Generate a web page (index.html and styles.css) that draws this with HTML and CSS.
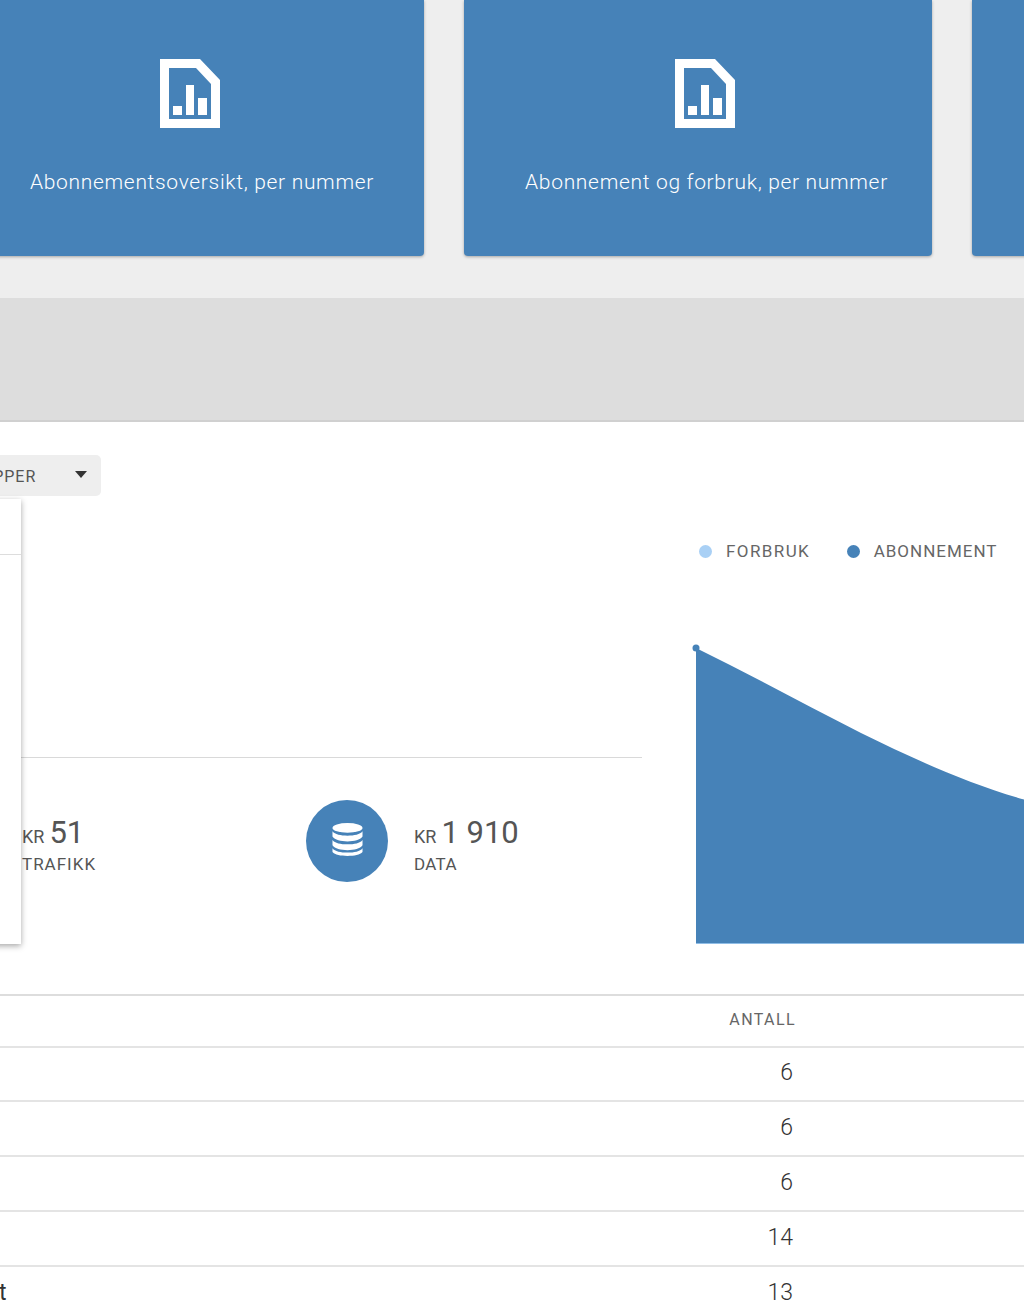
FILE: index.html
```html
<!DOCTYPE html>
<html lang="no">
<head>
<meta charset="utf-8">
<title>Rapporter</title>
<link rel="stylesheet" href="styles.css">
</head>
<body>
<div class="cards">
  <a class="card card-a">
    <svg class="doc-icon" viewBox="0 0 60 69"><path fill="#fff" fill-rule="evenodd" d="M0 0H40L60 21V69H0ZM9 9V60H51V25L36 9Z"/><path fill="#fff" d="M13 47H22V56H13ZM26 26H34V56H26ZM38 39H47V56H38Z"/></svg>
    <span>Abonnementsoversikt, per nummer</span>
  </a>
  <a class="card card-b">
    <svg class="doc-icon" viewBox="0 0 60 69"><path fill="#fff" fill-rule="evenodd" d="M0 0H40L60 21V69H0ZM9 9V60H51V25L36 9Z"/><path fill="#fff" d="M13 47H22V56H13ZM26 26H34V56H26ZM38 39H47V56H38Z"/></svg>
    <span>Abonnement og forbruk, per nummer</span>
  </a>
  <a class="card card-c"></a>
</div>
<div class="band"></div>
<section class="panel">
  <div class="overview">
    <div class="left">
      <div class="select"><span class="select-label">GRUPPER</span><i class="caret"></i></div>
      <div class="stats">
        <div class="stat stat-traffic">
          <div class="amount"><small>KR</small>51</div>
          <div class="stat-label">TRAFIKK</div>
        </div>
        <div class="stat stat-data">
          <div class="circle">
            <svg viewBox="0 0 32 34" class="db-icon"><ellipse cx="16" cy="5" rx="15.500" ry="5" fill="#fff"/><path fill="#fff" d="M.5 8.500C3 12 9 13 16 13s13-1 15.500-4.500V14C29 17.500 23 19 16 19S3 17.500.5 14ZM.5 17.500C3 21 9 22 16 22s13-1 15.500-4.500V23C29 26.500 23 28 16 28S3 26.500.5 23ZM.5 26C3 29.500 9 30.500 16 30.500S29 29.500 31.500 26V30c-2.500 3-8.500 4-15.500 4S3 33 .5 30Z"/></svg>
          </div>
          <div class="stat-text">
            <div class="amount"><small>KR</small>1 910</div>
            <div class="stat-label stat-label-tight">DATA</div>
          </div>
        </div>
      </div>
      <div class="menu"><div class="menu-head"></div></div>
    </div>
    <div class="chart">
      <div class="legend">
        <span class="legend-item"><i class="dot dot-light"></i>FORBRUK</span>
        <span class="legend-item legend-item-tight"><i class="dot dot-dark"></i>ABONNEMENT</span>
      </div>
      <svg class="area" viewBox="0 0 330 300" preserveAspectRatio="none">
        <path fill="#8fbde6" d="M0 186H330V298H0Z"/>
        <path fill="#4682b8" d="M0 2C55 29 110 59 165 87C220 114 275 139 330 154V297H0Z"/>
        <circle cx="0" cy="2" r="3.500" fill="#4682b8"/>
      </svg>
    </div>
  </div>
  <table class="table">
    <thead><tr><th></th><th>ANTALL</th></tr></thead>
    <tbody>
      <tr><td></td><td>6</td></tr>
      <tr><td></td><td>6</td></tr>
      <tr><td></td><td>6</td></tr>
      <tr><td></td><td>14</td></tr>
      <tr><td class="name">t</td><td>13</td></tr>
    </tbody>
  </table>
</section>
</body>
</html>
```

FILE: styles.css
```css
html, body {
  margin: 0;
  height: 1305px;
  overflow: hidden;
}
body {
  background: #eeeeee;
  font-family: "Roboto", "Liberation Sans", sans-serif;
  color: #555;
}
.cards {
  display: flex;
  gap: 40px;
  margin-left: -44px;
  margin-bottom: 42px;
  width: 1600px;
}
.card {
  box-sizing: border-box;
  flex: 0 0 468px;
  height: 256px;
  background: #4682b8;
  border-radius: 0 0 4px 4px;
  box-shadow: 0 1px 3px rgba(0, 0, 0, .3);
  color: #fff;
  display: flex;
  flex-direction: column;
  align-items: center;
  padding-top: 59px;
  font-size: 21px;
  font-weight: 300;
  letter-spacing: .68px;
  line-height: 30px;
  white-space: nowrap;
}
.card-a { padding-left: 24px; }
.card-b { padding-left: 17px; }
.doc-icon {
  width: 60px;
  height: 69px;
  margin-bottom: 39px;
}
.card-a .doc-icon { margin-right: 24px; }
.card-b .doc-icon { margin-right: 3px; }
.band {
  height: 122px;
  background: #dddddd;
  border-bottom: 2px solid #d0d0d0;
}
.panel {
  background: #fff;
  height: 884px;
  overflow: hidden;
}
.overview {
  display: flex;
  height: 572px;
}
.left {
  position: relative;
  width: 642px;
  flex: none;
  margin-right: 54px;
}
.select {
  position: absolute;
  left: -60px;
  top: 33px;
  box-sizing: border-box;
  width: 160.500px;
  height: 41px;
  background: #eeeeee;
  border-radius: 5px;
  display: flex;
  align-items: center;
  justify-content: space-between;
  padding: 0 14px 0 0;
  font-size: 16px;
  letter-spacing: 1px;
}
.select-label { margin-left: 19px; padding-top: 2px; }
.caret {
  border-left: 6.500px solid transparent;
  border-right: 6.500px solid transparent;
  border-top: 7px solid #333;
  margin-bottom: 3px;
}
.menu {
  position: absolute;
  left: -40px;
  top: 77px;
  width: 61px;
  height: 445px;
  background: #fff;
  box-shadow: 0 2px 6px rgba(0, 0, 0, .35);
}
.menu-head {
  height: 55px;
  border-bottom: 1px solid #ddd;
}
.stats {
  position: absolute;
  left: 0;
  right: 0;
  top: 335px;
  border-top: 1px solid #d9d9d9;
  height: 180px;
}
.stat {
  position: absolute;
  display: flex;
  align-items: center;
  gap: 26px;
}
.stat-traffic { left: 22px; top: 57px; display: block; }
.stat-data { left: 306px; top: 42px; }
.stat-text { padding-top: 9px; }
.circle {
  width: 82px;
  height: 82px;
  border-radius: 50%;
  background: #4682b8;
  display: flex;
  align-items: center;
  justify-content: center;
}
.db-icon { width: 31px; height: 35px; margin: 0 0 4px; }
.amount {
  font-size: 31px;
  line-height: 36px;
  font-weight: 400;
  color: #555;
}
.amount small {
  font-size: 18px;
  font-weight: 400;
  line-height: 1;
  margin-right: 5px;
}
.stat-label {
  margin-top: 1px;
  font-size: 17px;
  line-height: 24px;
  letter-spacing: 1px;
  color: #555;
}
.stat-label-tight { letter-spacing: .3px; }
.chart {
  flex: 1;
  min-width: 0;
  position: relative;
}
.legend {
  position: absolute;
  left: 3px;
  top: 117px;
  display: flex;
  gap: 37px;
  font-size: 17px;
  line-height: 24px;
  letter-spacing: 1.400px;
  color: #666;
  white-space: nowrap;
}
.legend-item {
  display: flex;
  align-items: center;
  gap: 14px;
}
.legend-item-tight { letter-spacing: 1px; gap: 13.500px; }
.dot {
  width: 13px;
  height: 13px;
  border-radius: 50%;
}
.dot-light { background: #a9d0f5; }
.dot-dark { background: #4682b8; }
.area {
  position: absolute;
  left: 0;
  top: 224px;
  width: 330px;
  height: 300px;
  overflow: visible;
}
.table {
  border-collapse: collapse;
  width: 1024px;
  table-layout: fixed;
  font-size: 23px;
  font-weight: 300;
  color: #333;
}
.table th, .table td {
  padding: 0 0 3px;
  box-sizing: border-box;
}
.table th:first-child, .table td:first-child { width: 595px; }
.table th {
  height: 52px;
  border-top: 2px solid #ddd;
  border-bottom: 2px solid #e4e4e4;
  font-size: 16px;
  font-weight: 400;
  letter-spacing: 1.400px;
  color: #666;
}
.table td {
  height: 55px;
  border-bottom: 2px solid #e4e4e4;
}
.table tbody tr:first-child td { height: 54px; }
.table th:last-child { text-align: right; padding-right: 228px; }
.table td:last-child {
  text-align: right;
  padding-right: 231px;
}
.table .name { text-indent: -1px; font-weight: 400; }
```
